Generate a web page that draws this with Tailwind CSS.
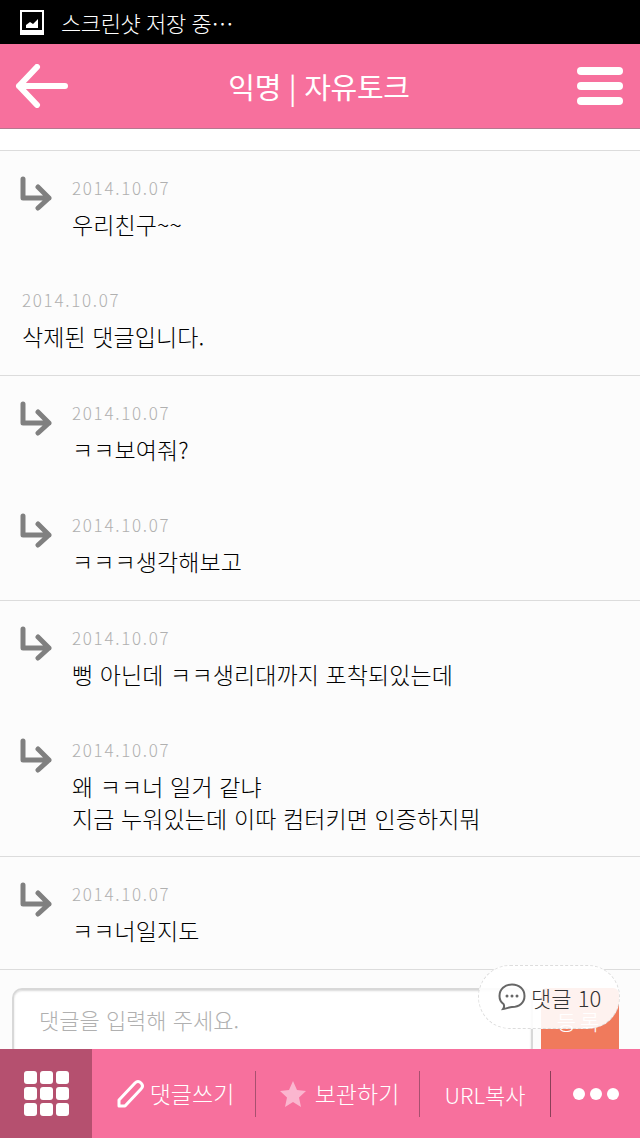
<!DOCTYPE html>
<html lang="ko">
<head>
  <meta charset="UTF-8" />
  <meta name="viewport" content="width=device-width, initial-scale=1" />
  <title>자유토크</title>
  <script src="https://cdn.jsdelivr.net/npm/@tailwindcss/browser@4"></script>
</head>
<body class="bg-[#fcfcfc] font-['Noto_Sans_CJK_KR',sans-serif] font-light">
<div class="relative w-[640px] h-[1138px] overflow-hidden flex flex-col">

  <!-- status bar -->
  <div class="h-[44px] bg-black flex items-center pl-[20px] text-white">
    <svg width="24" height="25" viewBox="0 0 24 25">
      <rect x="1" y="1" width="22" height="23" fill="none" stroke="#fff" stroke-width="2"/>
      <rect x="1" y="20" width="22" height="4" fill="#fff"/>
      <path d="M6 18 L6 15 L10 12 L13 14 L18 9 L18 18 Z" fill="#fff"/>
    </svg>
    <span class="ml-[17px] text-[22px] leading-none tracking-[-0.4px]">스크린샷 저장 중…</span>
  </div>

  <!-- header -->
  <div class="h-[85px] bg-[#f7709d] border-b border-[#b5788f] flex items-center justify-between pl-[15px] pr-[17px]">
    <svg width="54" height="44" viewBox="0 0 54 44">
      <path d="M22 3 L4 22 L22 41 M4 22 L50 22" fill="none" stroke="#fff" stroke-width="6" stroke-linecap="round" stroke-linejoin="round"/>
    </svg>
    <span class="mr-[8px] text-white text-[29px] font-normal leading-none tracking-[-0.3px]">익명 | 자유토크</span>
    <div class="w-[46px] flex flex-col gap-[7px]">
      <div class="h-[8px] rounded-full bg-white"></div>
      <div class="h-[8px] rounded-full bg-white"></div>
      <div class="h-[8px] rounded-full bg-white"></div>
    </div>
  </div>

  <!-- comments -->
  <div class="h-[21px] bg-white"></div>

  <section class="h-[225px] border-t border-[#dcdcdc]">
    <div class="h-[112px] flex pl-[20px] pt-[25px]">
      <svg width="32" height="36" viewBox="0 0 32 36" class="shrink-0"><path d="M3 3 L3 22 L29 22 M18 11 L29 22 L18 32" fill="none" stroke="#808080" stroke-width="5" stroke-linecap="round" stroke-linejoin="round"/></svg>
      <div class="ml-[20px]">
        <p class="text-[17px] leading-[24px] tracking-[1.7px] text-[#b0b0b0]">2014.10.07</p>
        <p class="mt-[9px] text-[23px] leading-[30px] tracking-[0.1px] text-black">우리친구~~</p>
      </div>
    </div>
    <div class="pl-[22px] pt-[25px]">
      <p class="text-[17px] leading-[24px] tracking-[1.7px] text-[#b0b0b0]">2014.10.07</p>
      <p class="mt-[9px] text-[23px] leading-[30px] tracking-[0.1px] text-black">삭제된 댓글입니다.</p>
    </div>
  </section>

  <section class="h-[225px] border-t border-[#dcdcdc]">
    <div class="h-[112px] flex pl-[20px] pt-[25px]">
      <svg width="32" height="36" viewBox="0 0 32 36" class="shrink-0"><path d="M3 3 L3 22 L29 22 M18 11 L29 22 L18 32" fill="none" stroke="#808080" stroke-width="5" stroke-linecap="round" stroke-linejoin="round"/></svg>
      <div class="ml-[20px]">
        <p class="text-[17px] leading-[24px] tracking-[1.7px] text-[#b0b0b0]">2014.10.07</p>
        <p class="mt-[9px] text-[23px] leading-[30px] tracking-[0.1px] text-black">ㅋㅋ보여줘?</p>
      </div>
    </div>
    <div class="h-[112px] flex pl-[20px] pt-[25px]">
      <svg width="32" height="36" viewBox="0 0 32 36" class="shrink-0"><path d="M3 3 L3 22 L29 22 M18 11 L29 22 L18 32" fill="none" stroke="#808080" stroke-width="5" stroke-linecap="round" stroke-linejoin="round"/></svg>
      <div class="ml-[20px]">
        <p class="text-[17px] leading-[24px] tracking-[1.7px] text-[#b0b0b0]">2014.10.07</p>
        <p class="mt-[9px] text-[23px] leading-[30px] tracking-[0.1px] text-black">ㅋㅋㅋ생각해보고</p>
      </div>
    </div>
  </section>

  <section class="h-[256px] border-t border-[#dcdcdc]">
    <div class="h-[112px] flex pl-[20px] pt-[25px]">
      <svg width="32" height="36" viewBox="0 0 32 36" class="shrink-0"><path d="M3 3 L3 22 L29 22 M18 11 L29 22 L18 32" fill="none" stroke="#808080" stroke-width="5" stroke-linecap="round" stroke-linejoin="round"/></svg>
      <div class="ml-[20px]">
        <p class="text-[17px] leading-[24px] tracking-[1.7px] text-[#b0b0b0]">2014.10.07</p>
        <p class="mt-[9px] text-[23px] leading-[30px] tracking-[0.1px] text-black">뻥 아닌데 ㅋㅋ생리대까지 포착되있는데</p>
      </div>
    </div>
    <div class="flex pl-[20px] pt-[25px]">
      <svg width="32" height="36" viewBox="0 0 32 36" class="shrink-0"><path d="M3 3 L3 22 L29 22 M18 11 L29 22 L18 32" fill="none" stroke="#808080" stroke-width="5" stroke-linecap="round" stroke-linejoin="round"/></svg>
      <div class="ml-[20px]">
        <p class="text-[17px] leading-[24px] tracking-[1.7px] text-[#b0b0b0]">2014.10.07</p>
        <p class="mt-[8px] text-[23px] leading-[32px] tracking-[0.1px] text-black">왜 ㅋㅋ너 일거 같냐<br>지금 누워있는데 이따 컴터키면 인증하지뭐</p>
      </div>
    </div>
  </section>

  <section class="h-[113px] border-t border-[#dcdcdc]">
    <div class="flex pl-[20px] pt-[25px]">
      <svg width="32" height="36" viewBox="0 0 32 36" class="shrink-0"><path d="M3 3 L3 22 L29 22 M18 11 L29 22 L18 32" fill="none" stroke="#808080" stroke-width="5" stroke-linecap="round" stroke-linejoin="round"/></svg>
      <div class="ml-[20px]">
        <p class="text-[17px] leading-[24px] tracking-[1.7px] text-[#b0b0b0]">2014.10.07</p>
        <p class="mt-[9px] text-[23px] leading-[30px] tracking-[0.1px] text-black">ㅋㅋ너일지도</p>
      </div>
    </div>
  </section>

  <!-- input row -->
  <div class="h-[80px] border-t border-[#dcdcdc] flex items-start pt-[18px] pl-[12px]">
    <div class="w-[521px] h-[70px] bg-white rounded-[10px] border-2 border-[#d8d8d8] pl-[25px] pt-[14px] text-[22px] leading-[30px] text-[#b0b0b0] shadow-[inset_0_1px_2px_rgba(0,0,0,0.15)]">댓글을 입력해 주세요.</div>
    <div class="ml-[8px] w-[78px] h-[70px] bg-[#f07a5c] rounded-[6px] pt-[18px] text-center text-[21px] leading-[30px] tracking-[4px] text-white">등록</div>
  </div>

  <!-- bottom nav -->
  <nav class="absolute left-0 bottom-0 w-full h-[89px] bg-[#f7709d] flex items-center text-white text-[23px] leading-none">
    <div class="w-[92px] h-full bg-[#b5506f] flex items-center justify-center">
      <div class="grid grid-cols-3 gap-[3px]">
        <i class="w-[13px] h-[13px] rounded-[3px] bg-white"></i><i class="w-[13px] h-[13px] rounded-[3px] bg-white"></i><i class="w-[13px] h-[13px] rounded-[3px] bg-white"></i>
        <i class="w-[13px] h-[13px] rounded-[3px] bg-white"></i><i class="w-[13px] h-[13px] rounded-[3px] bg-white"></i><i class="w-[13px] h-[13px] rounded-[3px] bg-white"></i>
        <i class="w-[13px] h-[13px] rounded-[3px] bg-white"></i><i class="w-[13px] h-[13px] rounded-[3px] bg-white"></i><i class="w-[13px] h-[13px] rounded-[3px] bg-white"></i>
      </div>
    </div>
    <div class="w-[164px] h-[46px] flex items-center justify-center gap-[4px] border-r border-[#a8506f] pl-[3px]">
      <svg width="30" height="30" viewBox="0 0 30 30"><path d="M3 21 L19 4 Q22 1 25 4 Q28 7 25 10 L9 27 L3 27 Z" fill="none" stroke="#fff" stroke-width="3" stroke-linejoin="round"/></svg>
      <span>댓글쓰기</span>
    </div>
    <div class="w-[164px] h-[46px] flex items-center justify-center gap-[8px] border-r border-[#a8506f] pl-[3px]">
      <svg width="28" height="28" viewBox="0 0 28 28"><path d="M14 1 L18 10 L27 11 L20 17.500 L22 27 L14 22 L6 27 L8 17.500 L1 11 L10 10 Z" fill="#fbb6cf"/></svg>
      <span>보관하기</span>
    </div>
    <div class="w-[131px] h-[46px] flex items-center justify-center border-r border-[#8a3f58] text-[22px]">URL복사</div>
    <div class="flex-1 flex justify-center gap-[5px]">
      <i class="w-[12px] h-[12px] rounded-full bg-white"></i>
      <i class="w-[12px] h-[12px] rounded-full bg-white"></i>
      <i class="w-[12px] h-[12px] rounded-full bg-white"></i>
    </div>
  </nav>

  <!-- comment count bubble -->
  <div class="absolute left-[478px] top-[965px] w-[142px] h-[64px] rounded-[32px] bg-white/90 border border-dashed border-[#dddddd] flex items-center pl-[18px] gap-[4px] text-[#333333] text-[22px] leading-none">
    <svg width="30" height="30" viewBox="0 0 30 30" class="shrink-0">
      <path d="M15 2.500 C22.500 2.500 27.500 7.500 27.500 14 C27.500 20.500 22.500 25 15 25 C12.500 25 10 26.500 6 27 C7 25.500 7.500 23.500 6.500 22 C3.500 20 2.500 17 2.500 14 C2.500 7.500 7.500 2.500 15 2.500 Z" fill="none" stroke="#666666" stroke-width="2"/>
      <circle cx="10" cy="14" r="1.500" fill="#666666"/><circle cx="15" cy="14" r="1.500" fill="#666666"/><circle cx="20" cy="14" r="1.500" fill="#666666"/>
    </svg>
    <span>댓글 10</span>
  </div>
</div>
</body>
</html>
